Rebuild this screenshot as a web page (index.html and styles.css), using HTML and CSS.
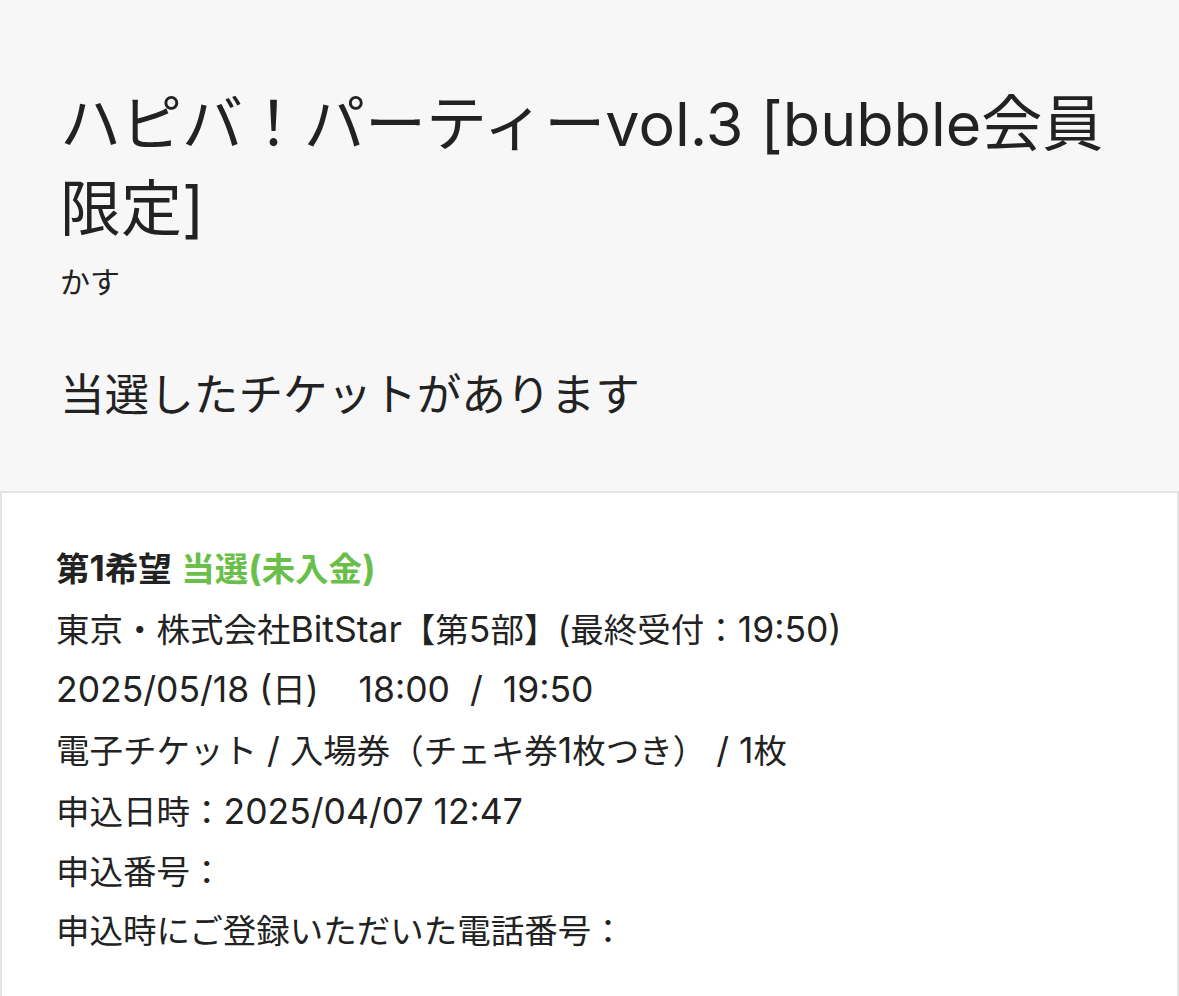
FILE: index.html
```html
<!DOCTYPE html>
<html lang="ja">
<head>
<meta charset="utf-8">
<link rel="stylesheet" href="styles.css">
</head>
<body>
<div class="page">
  <header class="head">
    <h1 class="title">ハピバ！パーティーvol.3 [bubble会員限定]</h1>
    <p class="artist">かす</p>
    <p class="notice">当選したチケットがあります</p>
  </header>
  <section class="card">
    <p class="line"><b class="rank">第<span class="en">1</span>希望</b> <b class="status">当選<span class="en">(</span>未入金<span class="en">)</span></b></p>
    <p class="line">東京・株式会社<span class="en">BitStar</span>【第<span class="en">5</span>部】<span class="en">(</span>最終受付：<span class="en">19:50)</span></p>
    <p class="line"><span class="en">2025/05/18 (</span>日<span class="en">)&nbsp;&nbsp;&nbsp; 18:00&nbsp; /&nbsp; 19:50</span></p>
    <p class="line">電子チケット<span class="en"> / </span>入場券（チェキ券<span class="en">1</span>枚つき）<span class="en"> / 1</span>枚</p>
    <p class="line">申込日時：<span class="en">2025/04/07 12:47</span></p>
    <p class="line">申込番号：</p>
    <p class="line">申込時にご登録いただいた電話番号：</p>
  </section>
</div>
</body>
</html>
```

FILE: styles.css
```css
html, body {
  margin: 0;
  padding: 0;
  background: #f7f7f7;
}
body {
  font-family: Inter, "Noto Sans CJK JP", sans-serif;
  color: #222222;
}
.page {
  display: flex;
  flex-direction: column;
  min-height: 996px;
}
.head {
  padding: 82px 60px 61px 60px;
}
.title {
  margin: 0;
  font-size: 61px;
  font-weight: 400;
  line-height: 85px;
}
.artist {
  margin: 0;
  font-size: 30px;
  line-height: 60px;
}
.notice {
  margin: 48px 0 0 0;
  font-size: 44.6px;
  line-height: 70px;
}
.card {
  flex: 1;
  background: #ffffff;
  border: 2px solid #e4e4e4;
  border-bottom: none;
  padding: 46px 54px 0 54px;
}
.line {
  margin: 0;
  font-size: 33.5px;
  line-height: 59.7px;
  white-space: nowrap;
}
.en {
  font-size: 35.5px;
}
.rank {
  font-weight: 700;
  color: #222222;
}
.status {
  font-weight: 700;
  color: #6abf4b;
}
```
